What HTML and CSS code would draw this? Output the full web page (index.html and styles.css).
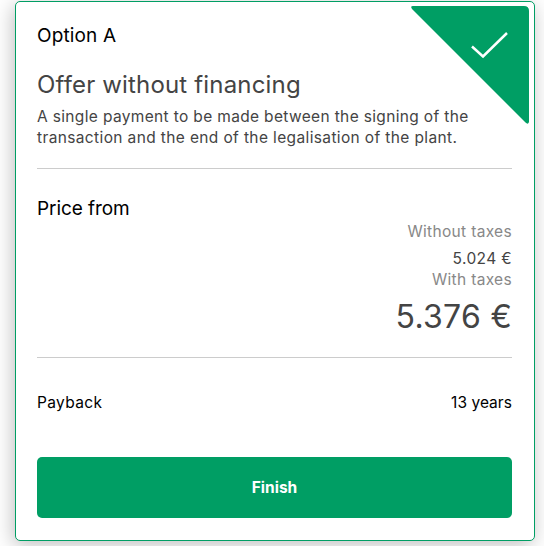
FILE: index.html
```html
<!DOCTYPE html>
<html lang="en">
<head>
<meta charset="utf-8">
<title>Option A</title>
<link rel="stylesheet" href="styles.css">
</head>
<body>
<main class="card">
  <svg class="ribbon" width="119" height="119" viewBox="0 0 119 119" aria-hidden="true">
    <path d="M2 0H113Q118 0 118 5V116Q117 119 114.500 116.500L1 3Q-1 0 2 0Z" fill="#009e64"/>
    <path d="M61 40.500L72 50.500L96 27" fill="none" stroke="#fff" stroke-width="2.500"/>
  </svg>
  <header class="intro">
    <h2 class="option">Option A</h2>
    <h1 class="title">Offer without financing</h1>
    <p class="description"><span class="line-one">A single payment to be made between the signing of the</span><br><span class="line-two">transaction and the end of the legalisation of the plant.</span></p>
  </header>
  <section class="price">
    <h2 class="price-heading">Price from</h2>
    <div class="amounts">
      <span class="tax-label without">Without taxes</span>
      <span class="net">5.024 €</span>
      <span class="tax-label with">With taxes</span>
      <strong class="gross">5.376 €</strong>
    </div>
  </section>
  <div class="payback"><span class="payback-label">Payback</span><span class="years">13 years</span></div>
  <button class="finish" type="button">Finish</button>
</main>
</body>
</html>
```
FILE: styles.css
```css
* { box-sizing: border-box; }
body { margin: 0; padding: 1px 9px 0 15px; height: 546px; overflow: hidden; background: #fff; color: #000; font-family: Inter, sans-serif; font-size: 15.5px; line-height: 21px; }
h1, h2, p { margin: 0; font-weight: 400; }
.card { position: relative; display: flex; flex-direction: column; width: 520px; height: 540px; padding: 21px 22px 21px 21px; border: 1px solid #009e64; border-radius: 5px; background: #fff; box-shadow: -2px 4px 20px rgba(0, 0, 0, .25); }
.ribbon { position: absolute; top: 4px; right: 4px; }
.intro { height: 146px; border-bottom: 1px solid #ccc; color: #444; white-space: nowrap; }
.option, .price-heading { color: #000; font-size: 19px; line-height: 26px; }
.option { letter-spacing: .15px; }
.price-heading { letter-spacing: -.08px; }
.title { margin-top: 20px; font-size: 24px; line-height: 32px; letter-spacing: .17px; }
.description { margin-top: 5px; }
.line-one { letter-spacing: .345px; }
.line-two { letter-spacing: .37px; }
.price { height: 189px; padding-top: 27px; border-bottom: 1px solid #ccc; }
.amounts { display: flex; flex-direction: column; align-items: flex-end; margin-top: -1px; color: #444; }
.tax-label { color: #888; letter-spacing: .33px; }
.net { margin-top: 6px; letter-spacing: .38px; }
.gross { margin-top: 6px; font-size: 32px; line-height: 42px; font-weight: 400; letter-spacing: .28px; }
.payback { display: flex; justify-content: space-between; padding-top: 34px; }
.payback-label { letter-spacing: .35px; }
.years { letter-spacing: .05px; }
.finish { height: 61px; margin-top: 44px; padding: 0; border: 0; border-radius: 5px; background: #009e64; color: #fff; font: 700 15.5px/21px Inter, sans-serif; }
```
